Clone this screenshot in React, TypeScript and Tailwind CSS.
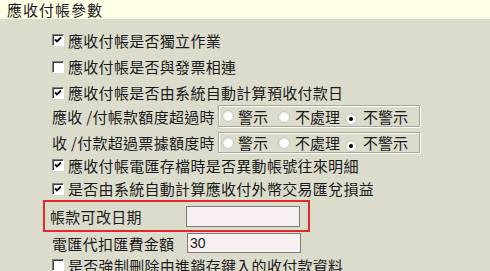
import React from "react";

const font = "font-['Noto_Sans_CJK_TC','Noto_Sans',sans-serif]";

function Check({ checked }: { checked: boolean }) {
  return (
    <span className="relative inline-block w-[12px] h-[12px] shrink-0 bg-white border border-t-[#808080] border-l-[#808080] border-b-white border-r-white shadow-[inset_1px_1px_0_#404040]">
      {checked && (
        <svg className="absolute left-0 top-0" width="10" height="10" viewBox="0 0 10 10">
          <path d="M2 4.5 L4 6.5 L8 2.5" stroke="#000" strokeWidth="1.8" fill="none" />
        </svg>
      )}
    </span>
  );
}

function Radio({ checked }: { checked: boolean }) {
  return (
    <span className="relative inline-flex items-center justify-center w-[12px] h-[12px] shrink-0 rounded-full border border-[#c8c8bc] bg-[radial-gradient(circle_at_60%_60%,#ffffff_35%,#dcdcd2_100%)]">
      {checked && <span className="w-[4px] h-[4px] rounded-full bg-black" />}
    </span>
  );
}

function CheckRow({ checked, text, h }: { checked: boolean; text: string; h: string }) {
  return (
    <div className={`flex items-center gap-[4px] ${h}`}>
      <Check checked={checked} />
      <span className="tracking-[0.3px]">{text}</span>
    </div>
  );
}

function RadioRow({ label, h, mt }: { label: string; h: string; mt: string }) {
  return (
    <div className={`flex items-center ${mt}`}>
      <span className="w-[166px] tracking-[0.3px]">{label}</span>
      <div className={`flex items-center w-[202px] ${h} border border-[#a8a898] shadow-[inset_1px_1px_0_#ffffff,1px_1px_0_#ffffff] pl-[3px]`}>
        <Radio checked={false} />
        <span className="ml-[4px]">警示</span>
        <span className="ml-[10px]"><Radio checked={false} /></span>
        <span className="ml-[5px]">不處理</span>
        <span className="ml-[5px]"><Radio checked={true} /></span>
        <span className="ml-[6px]">不警示</span>
      </div>
    </div>
  );
}

export default function App() {
  return (
    <div className={`w-[490px] h-[271px] overflow-hidden bg-[#dcdccd] text-[#1a1a1a] text-[15px] leading-none ${font}`}>
      <div className="h-[19px] bg-[#fefee6] flex items-center pl-[7px] tracking-[1px]">應收付帳參數</div>
      <div className="pl-[52px] pt-[8px] flex flex-col">
        <CheckRow checked={true} text="應收付帳是否獨立作業" h="h-[26px]" />
        <CheckRow checked={false} text="應收付帳是否與發票相連" h="h-[27px]" />
        <CheckRow checked={true} text="應收付帳是否由系統自動計算預收付款日" h="h-[25px]" />
        <RadioRow label="應收 /付帳款額度超過時" h="h-[22px]" mt="mt-0" />
        <RadioRow label="收 /付款超過票據額度時" h="h-[21px]" mt="mt-[5px]" />
        <CheckRow checked={true} text="應收付帳電匯存檔時是否異動帳號往來明細" h="h-[24px]" />
        <CheckRow checked={true} text="是否由系統自動計算應收付外幣交易匯兌損益" h="h-[23px]" />
        <div className="ml-[-9px] w-[267px] h-[32px] border-2 border-[#dd2a2a] flex items-center pl-[5px]">
          <span className="w-[136px] tracking-[0.3px]">帳款可改日期</span>
          <div className="w-[114px] h-[21px] bg-[#f8eff1] border border-[#7c7c7c]" />
        </div>
        <div className="flex items-center h-[20px] mt-[1px]">
          <span className="w-[135px] tracking-[0.3px]">電匯代扣匯費金額</span>
          <div className="w-[114px] h-[20px] bg-[#f8eff1] border border-[#7c7c7c] flex items-center pl-[2px] text-[14px] font-['Liberation_Sans',sans-serif]">30</div>
        </div>
        <CheckRow checked={false} text="是否強制刪除由進銷存鍵入的收付款資料" h="h-[24px]" />
      </div>
    </div>
  );
}
